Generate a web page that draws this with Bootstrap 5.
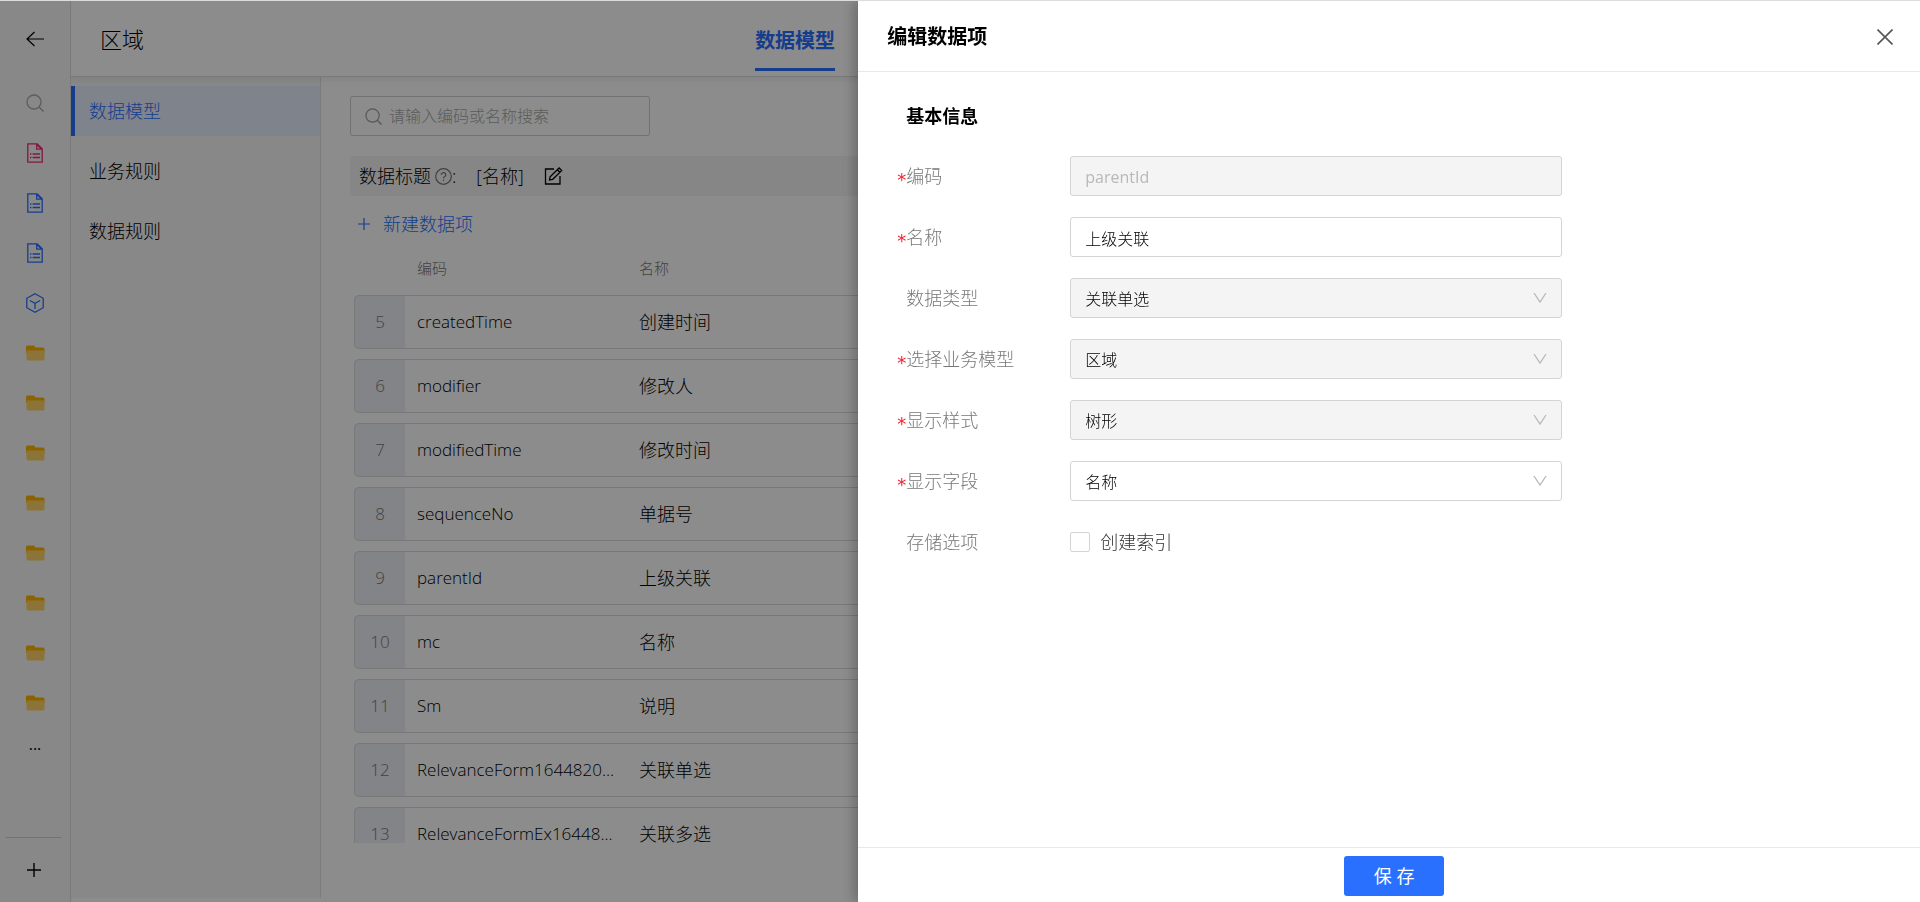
<!DOCTYPE html>
<html lang="zh-CN">
<head>
<meta charset="utf-8">
<meta name="viewport" content="width=device-width, initial-scale=1">
<title>区域</title>
<link href="https://cdn.jsdelivr.net/npm/bootstrap@5.3.0/dist/css/bootstrap.min.css" rel="stylesheet">
<style>
  :root { --brand: #2970ff; --line: #dcdcdc; }
  body { font-family: "Open Sans", "Noto Sans CJK SC", sans-serif; font-size: 18px; font-weight: 300; line-height: 24px; color: #000; overflow: hidden; }
  a { text-decoration: none; color: inherit; }
  svg { display: block; }
  .top-line { height: 1px; background: var(--line); z-index: 1100; }
  .shell { padding-top: 1px; }

  .rail { width: 71px; background: #f8f8f8; border-right: 1px solid var(--line); }
  .rail-item { height: 50px; }
  .rail-back { height: 76px; }
  .rail-search { height: 51px; color: #aaa; }
  .rail-more { height: 32px; font-size: 16px; font-weight: 400; }
  .rail-add { width: 55px; height: 65px; margin: 0 9px 0 6px; border-top: 1px solid #d0d0d0; }
  .tone-pink { color: #ea2a78; }
  .tone-blue { color: var(--brand); }

  .page-head { height: 76px; background: #fff; border-bottom: 1px solid var(--line); box-shadow: 0 2px 8px rgba(0,0,0,.08); z-index: 2; }
  .page-name { flex: 0 0 37%; padding-left: 29px; font-size: 22px; }
  .page-tab { font-size: 20px; line-height: 30px; font-weight: 700; color: var(--brand); padding-bottom: 12px; border-bottom: 3px solid var(--brand); margin-bottom: 5px; }

  .side { width: 250px; background: #f8f8f8; border-right: 1px solid #e2e2e2; padding-top: 9px; margin-bottom: 4px; gap: 10px; }
  .side a { height: 50px; padding-left: 14px; border-left: 4px solid transparent; }
  .side a.active { color: var(--brand); background: #e6efff; border-color: var(--brand); }

  .work { padding: 19px 24px 59px 29px; }
  .search-box { width: 300px; height: 40px; border: 1px solid #d0d0d0; border-radius: 3px; padding-left: 14px; }
  .search-box input { font-size: 16px; padding: 0 0 0 7px; border: 0; background: none; box-shadow: none; font-weight: 300; }
  .search-box input::placeholder { color: #a8a8a8; }
  .title-bar { height: 40px; margin-top: 20px; padding-left: 9px; background: #f5f5f5; border-radius: 4px; }
  .edit-btn { margin-left: 20px; }
  .add-btn { height: 40px; margin-top: 8px; padding: 0 0 0 7px; color: var(--brand); font-size: 18px; font-weight: 300; gap: 12px; border: 0; background: none; }

  .fields { margin: 0 4px; table-layout: fixed; width: 100%; border-collapse: separate; border-spacing: 0 10px; white-space: nowrap; }
  .fields th { height: 31px; padding: 0 0 4px 12px; font-size: 15px; font-weight: 300; color: #777; }
  .fields td { height: 54px; padding: 0 0 0 12px; border: 1px solid #dadada; border-width: 1px 0; }
  .fields td:first-child { padding: 0; text-align: center; color: #777; background: #eef0f7; border-left-width: 1px; border-radius: 5px 0 0 5px; }
  .fields td:last-child { border-right-width: 1px; border-radius: 0 5px 5px 0; }
  .fields td:nth-child(-n+2) { font-size: 17px; }

  .mask { background: #000; opacity: .45; z-index: 1040; }
  .offcanvas.drawer { --bs-offcanvas-width: 55.3%; top: 1px; border: 0; color: #000; background: #fff; box-shadow: -4px 0 12px rgba(0,0,0,.25); transition: none; outline: 0; }
  .drawer-head { height: 71px; padding: 2px 27px 0 29px; border-bottom: 1px solid #e8e8e8; }
  .drawer-head h1 { font-size: 20px; line-height: 30px; font-weight: 700; margin: 0; }
  .drawer-body { padding: 32px 40px 0; }
  .drawer-body h2 { font-size: 18px; line-height: 24px; font-weight: 700; margin: 0 0 28px 8px; }
  .field-list { gap: 21px; }
  .field-row { height: 40px; }
  .field-row .caption { width: 164px; color: #777; }
  .star { width: 9px; margin-left: -1px; padding-top: 8px; color: #f5222d; font-family: "DejaVu Sans", sans-serif; font-size: 18px; font-weight: 400; }
  .ctl.form-control, .ctl.form-select { max-width: 492px; height: 40px; font-size: 16px; font-weight: 300; color: #000; border: 1px solid #d4d4d4; border-radius: 3px; padding: 1px 14px 0; background-color: #fff; opacity: 1; box-shadow: none; }
  .ctl.form-select { background-image: url("data:image/svg+xml,%3Csvg xmlns='http://www.w3.org/2000/svg' viewBox='0 0 14 12'%3E%3Cpath d='M1 1l6 9 6-9' fill='none' stroke='%23b8b8b8' stroke-width='1.3'/%3E%3C/svg%3E"); background-size: 14px 12px; background-position: right 14px center; }
  .ctl.form-select:disabled, .ctl.form-control:disabled { background-color: #f4f4f4; }
  .ctl.form-control:disabled { color: #b8b8b8; font-weight: 400; }
  .tick.form-check-input { width: 20px; height: 20px; margin: 0 10px 0 0; border: 1px solid #d4d4d4; border-radius: 2px; }
  .tick-text { color: #333; }
  .drawer-foot { height: 55px; padding: 2px 0 0 10px; border-top: 1px solid #e8e8e8; }
  .save-btn { width: 100px; height: 40px; padding: 0; border: 0; border-radius: 3px; background: var(--brand); color: #fff; font-size: 18px; font-weight: 400; }
</style>
</head>
<body>
<svg class="d-none">
  <symbol id="i-doc" viewBox="0 0 16 20"><path d="M.8.8h9.4l5 5v13.4H.8zM9.7.8v5.4h5.500M9.7 1.200l5 5" fill="none" stroke="currentColor" stroke-width="1.300"/><path d="M3 11h1.400M5.600 11h7.400M3 14.500h1.400M5.600 14.500h7.400" stroke="currentColor" stroke-width="1.300"/></symbol>
  <symbol id="i-folder" viewBox="0 0 19 16"><path d="M0 2a1.500 1.500 0 0 1 1.500-1.500H8L9.500 2.500H17A1.500 1.500 0 0 1 18.500 4v4H0z" fill="#fdb300"/><path d="M.5 5.500h18V14a1.500 1.500 0 0 1-1.500 1.500H2A1.500 1.500 0 0 1 .5 14z" fill="#ffd466"/></symbol>
  <symbol id="i-search" viewBox="0 0 18 18"><circle cx="8" cy="8" r="7" fill="none" stroke="currentColor" stroke-width="1.300"/><path d="M13 13l4.500 4.500" stroke="currentColor" stroke-width="1.500"/></symbol>
</svg>
<div class="top-line fixed-top"></div>

<div class="shell d-flex vh-100">
  <nav class="rail d-flex flex-column flex-shrink-0" id="rail">
    <a href="#" class="rail-back d-flex align-items-center justify-content-center" aria-label="返回"><svg width="18" height="16" viewBox="0 0 18 16" fill="none" stroke="#000" stroke-width="1.200"><path d="M18 8H1M8.500 1L1 8l7.500 7"/></svg></a>
    <a href="#" class="rail-search d-flex align-items-center justify-content-center" aria-label="搜索"><svg width="18" height="18"><use href="#i-search"/></svg></a>
    <a href="#" class="rail-item tone-pink d-flex align-items-center justify-content-center" aria-label="表单"><svg width="16" height="20"><use href="#i-doc"/></svg></a>
    <a href="#" class="rail-item tone-blue d-flex align-items-center justify-content-center" aria-label="表单"><svg width="16" height="20"><use href="#i-doc"/></svg></a>
    <a href="#" class="rail-item tone-blue d-flex align-items-center justify-content-center" aria-label="表单"><svg width="16" height="20"><use href="#i-doc"/></svg></a>
    <a href="#" class="rail-item tone-blue d-flex align-items-center justify-content-center" aria-label="模型"><svg width="18" height="20" viewBox="0 0 18 20" fill="none" stroke="currentColor" stroke-width="1.300"><path d="M9 .8l8.200 4.500v9.400L9 19.200.8 14.700V5.300zM3.800 7.500L9 10.300l5.200-2.800M9 10.300V16"/></svg></a>
    <div id="folders"></div>
    <a href="#" class="rail-more d-flex align-items-center justify-content-center">...</a>
    <a href="#" class="rail-add mt-auto d-flex align-items-center justify-content-center" aria-label="新增"><svg width="14" height="16" viewBox="0 0 14 16" stroke="#000" stroke-width="1.400"><path d="M0 8h14M7 1v14"/></svg></a>
  </nav>

  <div class="d-flex flex-column flex-grow-1 overflow-hidden">
    <header class="page-head d-flex align-items-center flex-shrink-0 position-relative">
      <div class="page-name">区域</div>
      <a href="#" class="page-tab align-self-end">数据模型</a>
    </header>
    <div class="d-flex flex-grow-1 overflow-hidden">
      <nav class="side d-flex flex-column flex-shrink-0">
        <a href="#" class="active d-flex align-items-center">数据模型</a>
        <a href="#" class="d-flex align-items-center">业务规则</a>
        <a href="#" class="d-flex align-items-center">数据规则</a>
      </nav>
      <main class="work d-flex flex-column flex-grow-1 overflow-hidden">
        <div class="search-box d-flex align-items-center flex-shrink-0">
          <svg width="17" height="17" class="flex-shrink-0" color="#a0a0a0"><use href="#i-search"/></svg>
          <input type="text" class="form-control" placeholder="请输入编码或名称搜索" aria-label="搜索">
        </div>
        <div class="title-bar d-flex align-items-center flex-shrink-0">
          <span>数据标题</span>
          <svg class="ms-1" width="17" height="17" viewBox="0 0 17 17" fill="none" stroke="#777" stroke-width="1.200"><circle cx="8.500" cy="8.500" r="7.800"/><path d="M6.200 6.800a2.300 2.100 0 1 1 3.600 1.700c-.9.500-1.300.9-1.300 1.900M8.500 11.700v1.400"/></svg>
          <span>:</span>
          <span class="ms-3 ps-1">[名称]</span>
          <button type="button" class="edit-btn btn p-0 border-0" aria-label="编辑"><svg width="19" height="18" viewBox="0 0 19 18" fill="none" stroke="#000" stroke-width="1.300"><path d="M10 2H1.500v15H16V9M5.500 13l.6-3.300 9-8.700 2.600 2.600-9 8.700zM13.300 2.700l2.600 2.600"/></svg></button>
        </div>
        <button type="button" class="add-btn d-flex align-items-center flex-shrink-0 align-self-start"><svg width="14" height="14" viewBox="0 0 14 14" stroke="currentColor" stroke-width="1.200"><path d="M1 7h12M7 1v12"/></svg><span>新建数据项</span></button>
        <div class="overflow-hidden">
          <table class="fields">
            <colgroup><col style="width:51px"><col style="width:222px"><col></colgroup>
            <thead><tr><th></th><th scope="col">编码</th><th scope="col">名称</th></tr></thead>
            <tbody>
              <tr><td>5</td><td>createdTime</td><td>创建时间</td></tr>
              <tr><td>6</td><td>modifier</td><td>修改人</td></tr>
              <tr><td>7</td><td>modifiedTime</td><td>修改时间</td></tr>
              <tr><td>8</td><td>sequenceNo</td><td>单据号</td></tr>
              <tr><td>9</td><td>parentId</td><td>上级关联</td></tr>
              <tr><td>10</td><td>mc</td><td>名称</td></tr>
              <tr><td>11</td><td>Sm</td><td>说明</td></tr>
              <tr><td>12</td><td>RelevanceForm1644820...</td><td>关联单选</td></tr>
              <tr><td>13</td><td>RelevanceFormEx16448...</td><td>关联多选</td></tr>
            </tbody>
          </table>
        </div>
      </main>
    </div>
  </div>
</div>

<div class="mask position-fixed top-0 start-0 w-100 h-100"></div>
<section class="offcanvas offcanvas-end show drawer" data-bs-backdrop="false" data-bs-scroll="true" tabindex="-1" aria-labelledby="drawerTitle">
  <div class="drawer-head d-flex align-items-center justify-content-between flex-shrink-0">
    <h1 id="drawerTitle">编辑数据项</h1>
    <button type="button" class="btn p-0 border-0" aria-label="关闭"><svg width="16" height="16" viewBox="0 0 16 16" stroke="#555" stroke-width="1.600"><path d="M.5.5l15 15M15.500.5l-15 15"/></svg></button>
  </div>
  <form class="drawer-body flex-grow-1 overflow-auto">
    <h2>基本信息</h2>
    <div class="field-list d-flex flex-column">
      <div class="field-row d-flex align-items-center"><span class="star flex-shrink-0">*</span><label class="caption flex-shrink-0" for="f1">编码</label><input id="f1" class="ctl form-control" value="parentId" disabled></div>
      <div class="field-row d-flex align-items-center"><span class="star flex-shrink-0">*</span><label class="caption flex-shrink-0" for="f2">名称</label><input id="f2" class="ctl form-control" value="上级关联"></div>
      <div class="field-row d-flex align-items-center"><span class="star flex-shrink-0"></span><label class="caption flex-shrink-0" for="f3">数据类型</label><select id="f3" class="ctl form-select" disabled><option>关联单选</option></select></div>
      <div class="field-row d-flex align-items-center"><span class="star flex-shrink-0">*</span><label class="caption flex-shrink-0" for="f4">选择业务模型</label><select id="f4" class="ctl form-select" disabled><option>区域</option></select></div>
      <div class="field-row d-flex align-items-center"><span class="star flex-shrink-0">*</span><label class="caption flex-shrink-0" for="f5">显示样式</label><select id="f5" class="ctl form-select" disabled><option>树形</option></select></div>
      <div class="field-row d-flex align-items-center"><span class="star flex-shrink-0">*</span><label class="caption flex-shrink-0" for="f6">显示字段</label><select id="f6" class="ctl form-select"><option>名称</option></select></div>
      <div class="field-row d-flex align-items-center"><span class="star flex-shrink-0"></span><span class="caption flex-shrink-0">存储选项</span><input id="f7" type="checkbox" class="tick form-check-input"><label class="tick-text" for="f7">创建索引</label></div>
    </div>
  </form>
  <div class="drawer-foot d-flex align-items-center justify-content-center flex-shrink-0">
    <button type="button" class="save-btn btn">保 存</button>
  </div>
</section>
<script src="https://cdn.jsdelivr.net/npm/bootstrap@5.3.0/dist/js/bootstrap.bundle.min.js"></script>
<script>
  // Eight folders in the rail
  document.getElementById('folders').innerHTML = Array.from({ length: 8 }, () =>
    '<a href="#" class="rail-item d-flex align-items-center justify-content-center" aria-label="文件夹"><svg width="19" height="16"><use href="#i-folder"/></svg></a>').join('');
</script>
</body>
</html>
